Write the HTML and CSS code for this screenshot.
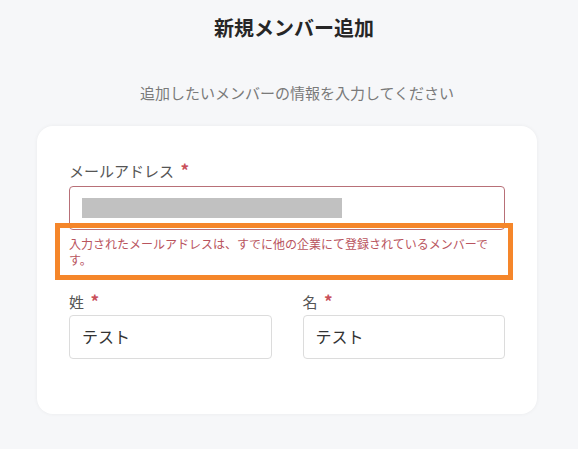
FILE: index.html
```html
<!DOCTYPE html>
<html lang="ja">
<head>
<meta charset="utf-8">
<link rel="stylesheet" href="styles.css">
</head>
<body>
<main class="page">
  <h1 class="title">新規メンバー追加</h1>
  <p class="subtitle">追加したいメンバーの情報を入力してください</p>
  <section class="card">
    <div class="field">
      <label class="label">メールアドレス <span class="req">*</span></label>
      <div class="input input-error"><span class="redacted"></span></div>
      <p class="error">入力されたメールアドレスは、すでに他の企業にて登録されているメンバーです。</p>
    </div>
    <div class="name-row">
      <div class="field">
        <label class="label">姓 <span class="req">*</span></label>
        <div class="input">テスト</div>
      </div>
      <div class="field">
        <label class="label">名 <span class="req">*</span></label>
        <div class="input">テスト</div>
      </div>
    </div>
    <div class="highlight"></div>
  </section>
</main>
</body>
</html>
```
FILE: styles.css
```css
* { box-sizing: border-box; }
html, body {
  margin: 0;
  padding: 0;
  background: #f6f7f9;
  font-family: "Noto Sans CJK JP", "Noto Sans", sans-serif;
  color: #333;
}
.page {
  width: 578px;
  height: 449px;
  padding-top: 13px;
}
.title {
  margin: 0;
  font-size: 20px;
  line-height: 30px;
  font-weight: 700;
  text-align: center;
  padding-left: 10px;
  color: #262626;
}
.subtitle {
  margin: 39px 0 0;
  font-size: 15px;
  line-height: 22px;
  text-align: center;
  padding-left: 16px;
  color: #7a7a7a;
}
.card {
  position: relative;
  margin: 22px 0 0 37px;
  width: 500px;
  height: 288px;
  background: #fff;
  border-radius: 16px;
  box-shadow: 0 0 4px rgba(0, 0, 0, 0.05);
  padding: 33px 32px 0 32px;
}
.field {
  display: flex;
  flex-direction: column;
}
.label {
  font-size: 15px;
  line-height: 22px;
  color: #555;
  margin-bottom: 4px;
}
.req {
  color: #c9505a;
  font-weight: 700;
  font-size: 17px;
  margin-left: 3px;
}
.input {
  height: 44px;
  border: 1px solid #dcdcdc;
  border-radius: 4px;
  padding: 0 12px 2px;
  font-size: 16px;
  line-height: 42px;
  color: #333;
  display: flex;
  align-items: center;
}
.input-error {
  border-color: #b87078;
  padding-bottom: 0;
}
.redacted {
  display: block;
  width: 260px;
  height: 20px;
  background: #c1c1c1;
}
.error {
  margin: 6px 0 0;
  padding-right: 6px;
  font-size: 12px;
  line-height: 16px;
  color: #b9545e;
}
.name-row {
  margin-top: 22px;
  display: grid;
  grid-template-columns: 1fr 1fr;
  column-gap: 31px;
}
.name-row .label { margin-bottom: 2px; }
.highlight {
  position: absolute;
  left: 18px;
  top: 97px;
  width: 458px;
  height: 57px;
  border: 5px solid #f5862a;
  pointer-events: none;
}
```
